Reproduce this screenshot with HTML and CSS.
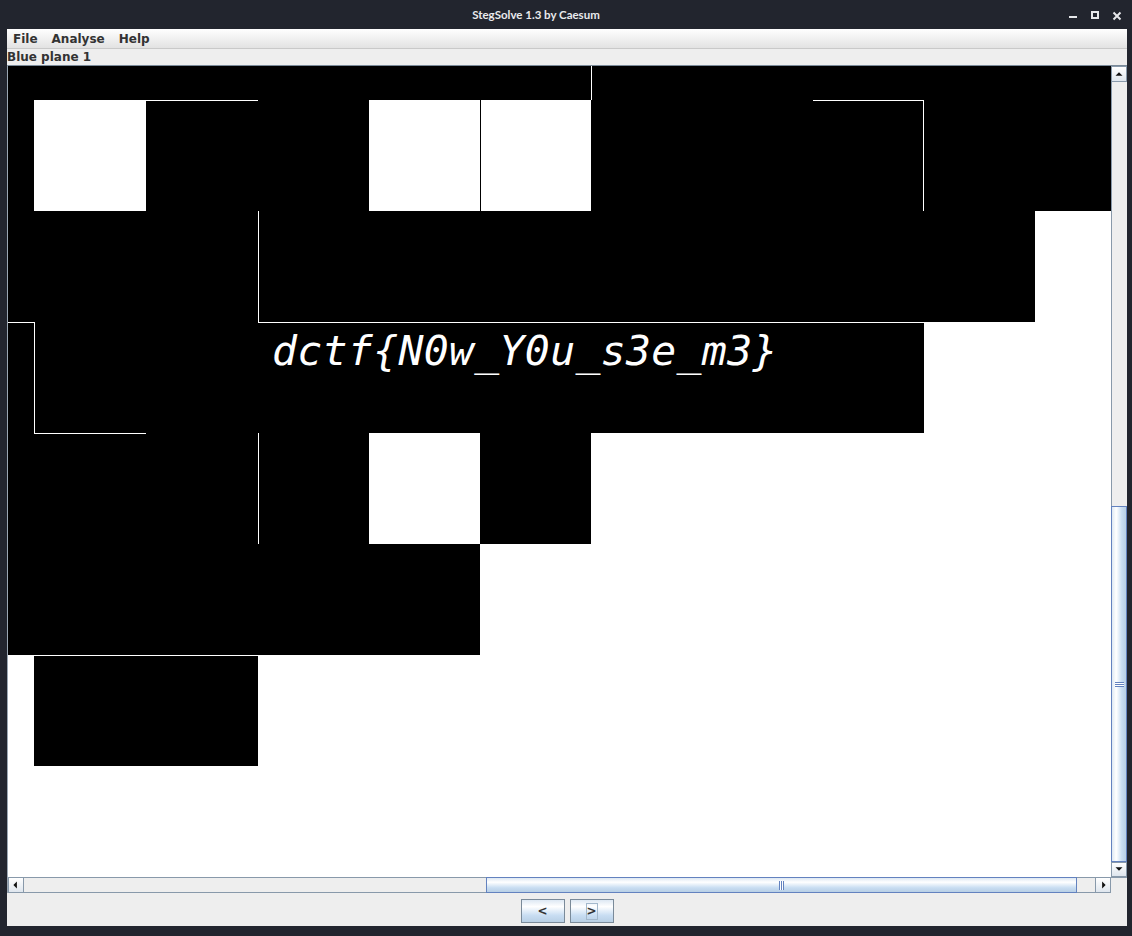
FILE: index.html
```html
<!DOCTYPE html>
<html>
<head>
<meta charset="utf-8">
<title>StegSolve 1.3 by Caesum</title>
<link rel="stylesheet" href="styles.css">
</head>
<body>
<div class="window">
  <div class="titlebar">
    <div class="title">StegSolve 1.3 by Caesum</div>
    <svg class="controls" width="72" height="29" viewBox="0 0 72 29">
      <rect x="9" y="16" width="8" height="2" fill="#e6e7ea"/>
      <rect x="32" y="12" width="6" height="6" fill="none" stroke="#e6e7ea" stroke-width="2"/>
      <path d="M53.5 12.5 L60.5 19.5 M60.5 12.5 L53.5 19.5" stroke="#e6e7ea" stroke-width="2"/>
    </svg>
  </div>
  <div class="client">
    <div class="menubar">
      <span class="menu">File</span>
      <span class="menu">Analyse</span>
      <span class="menu">Help</span>
    </div>
    <div class="label">Blue plane 1</div>
    <div class="scrollpane">
      <div class="pane-main">
        <div class="viewport">
          <div class="c k"></div><div class="c k"></div><div class="c k"></div><div class="c k"></div><div class="c k"></div><div class="c k"></div><div class="c k ll"></div><div class="c k"></div><div class="c k"></div><div class="c k"></div><div class="c k"></div>
          <div class="c k"></div><div class="c w"></div><div class="c k lt"></div><div class="c k"></div><div class="c w"></div><div class="c w dl"></div><div class="c k"></div><div class="c k"></div><div class="c k lt lr"></div><div class="c k"></div><div class="c k"></div>
          <div class="c k"></div><div class="c k"></div><div class="c k"></div><div class="c k ll"></div><div class="c k"></div><div class="c k"></div><div class="c k"></div><div class="c k"></div><div class="c k"></div><div class="c k"></div><div class="c w"></div>
          <div class="c k lt"></div><div class="c k ll"></div><div class="c k"></div><div class="c k lt"></div><div class="c k lt"></div><div class="c k lt"></div><div class="c k lt"></div><div class="c k lt"></div><div class="c k lt"></div><div class="c w"></div><div class="c w"></div>
          <div class="c k"></div><div class="c k lt"></div><div class="c k"></div><div class="c k ll"></div><div class="c w"></div><div class="c k"></div><div class="c w"></div><div class="c w"></div><div class="c w"></div><div class="c w"></div><div class="c w"></div>
          <div class="c k"></div><div class="c k"></div><div class="c k"></div><div class="c k"></div><div class="c k"></div><div class="c w"></div><div class="c w"></div><div class="c w"></div><div class="c w"></div><div class="c w"></div><div class="c w"></div>
          <div class="c w"></div><div class="c k lt"></div><div class="c k lt"></div><div class="c w"></div><div class="c w"></div><div class="c w"></div><div class="c w"></div><div class="c w"></div><div class="c w"></div><div class="c w"></div><div class="c w"></div>
          <div class="c w"></div><div class="c w"></div><div class="c w"></div><div class="c w"></div><div class="c w"></div><div class="c w"></div><div class="c w"></div><div class="c w"></div><div class="c w"></div><div class="c w"></div><div class="c w"></div>
          <div class="flag">dctf{N0w_Y0u_s3e_m3}</div>
        </div>
        <div class="vscroll">
          <div class="arrow-btn v-up">
            <svg width="16" height="16" viewBox="0 0 16 16"><path d="M4 10 L12 10 L8 6 Z" fill="#111"/></svg>
          </div>
          <div class="vtrack">
            <div class="vthumb"><span class="vgrip"></span></div>
          </div>
          <div class="arrow-btn v-down">
            <svg width="16" height="15" viewBox="0 0 16 15"><path d="M4 5 L12 5 L8 9 Z" fill="#111"/></svg>
          </div>
        </div>
      </div>
      <div class="pane-bottom">
        <div class="hscroll">
          <div class="arrow-btn h-left">
            <svg width="16" height="16" viewBox="0 0 16 16"><path d="M9 4 L9 12 L5 8 Z" fill="#111"/></svg>
          </div>
          <div class="htrack">
            <div class="hthumb"><span class="hgrip"></span></div>
          </div>
          <div class="arrow-btn h-right">
            <svg width="16" height="16" viewBox="0 0 16 16"><path d="M7 4 L7 12 L11 8 Z" fill="#111"/></svg>
          </div>
        </div>
        <div class="corner"></div>
      </div>
    </div>
    <div class="buttons">
      <button class="nav">&lt;</button>
      <button class="nav"><span class="focus">&gt;</span></button>
    </div>
  </div>
</div>
</body>
</html>
```
FILE: styles.css
```css
html, body {
  margin: 0;
  padding: 0;
  background: #22252e;
}

.window {
  width: 1132px;
  height: 936px;
  background: #22252e;
  display: flex;
  flex-direction: column;
  overflow: hidden;
}

.titlebar {
  height: 29px;
  flex: none;
  display: flex;
  align-items: center;
}

.title {
  flex: 1;
  text-align: center;
  padding-left: 12px;
  color: #e9eaec;
  font-family: Lato, "Open Sans", sans-serif;
  font-weight: 700;
  font-size: 11.5px;
}

.controls {
  display: block;
  flex: none;
}

.client {
  margin: 0 5px 10px 7px;
  height: 897px;
  flex: none;
  display: flex;
  flex-direction: column;
  background: #eeeeee;
}

.menubar {
  height: 19px;
  border-bottom: 1px solid #c9c9c9;
  background: linear-gradient(#ffffff, #e2e2e2);
  display: flex;
  align-items: center;
  font-family: "DejaVu Sans", sans-serif;
  font-weight: bold;
  font-size: 12px;
  color: #333333;
  flex: none;
}

.menu {
  padding: 0 6px;
  margin-right: 2px;
}

.label {
  height: 16px;
  line-height: 16px;
  font-family: "DejaVu Sans", sans-serif;
  font-weight: bold;
  font-size: 12px;
  color: #333333;
  flex: none;
}

.scrollpane {
  box-sizing: border-box;
  height: 828px;
  border-top: 1px solid #7a8a99;
  border-left: 1px solid #9aa6b2;
  display: flex;
  flex-direction: column;
  flex: none;
}

.pane-main {
  display: flex;
  height: 811px;
}

.viewport {
  position: relative;
  width: 1103px;
  height: 811px;
  overflow: hidden;
  display: grid;
  grid-template-columns: 26px 112px 112px repeat(7, 111px) 76px;
  grid-template-rows: 34px repeat(7, 111px);
  background: #ffffff;
}

.c { box-sizing: border-box; }
.k { background: #000000; }
.w { background: #ffffff; }
.lt { border-top: 1px solid #ffffff; }
.ll { border-left: 1px solid #ffffff; }
.lr { border-right: 1px solid #ffffff; }
.dl { border-left: 1px solid #000000; }

.flag {
  position: absolute;
  left: 264px;
  top: 264px;
  font-family: "DejaVu Sans Mono", monospace;
  font-style: italic;
  font-size: 41.5px;
  letter-spacing: 0.3px;
  line-height: 1;
  color: #ffffff;
  white-space: nowrap;
}

.vscroll {
  width: 16px;
  display: flex;
  flex-direction: column;
  background: #eeeeee;
}

.arrow-btn {
  box-sizing: border-box;
  border: 1px solid #8899aa;
  background: linear-gradient(#ffffff, #dfe6ee);
  display: flex;
  align-items: center;
  justify-content: center;
  flex: none;
}

.arrow-btn svg { display: block; }

.v-up { height: 16px; width: 16px; }
.v-down { height: 15px; width: 16px; }

.vtrack {
  flex: 1;
  display: flex;
  flex-direction: column;
  justify-content: flex-end;
  box-shadow: inset 1px 0 #8899aa;
}

.vthumb {
  box-sizing: border-box;
  height: 356px;
  border: 1px solid #6382bf;
  background: linear-gradient(to right, #dde8f3 0%, #ffffff 30%, #c8ddf2 70%, #b8cfe5 100%);
  display: flex;
  align-items: center;
  justify-content: center;
}

.vgrip {
  width: 9px;
  height: 5px;
  background: repeating-linear-gradient(#6382bf 0 1px, #ffffff 1px 2px);
}

.pane-bottom {
  display: flex;
  height: 16px;
}

.hscroll {
  width: 1103px;
  display: flex;
}

.h-left, .h-right { width: 16px; height: 16px; }

.htrack {
  flex: 1;
  padding-left: 462px;
  box-shadow: inset 0 1px #8899aa, inset 0 -1px #8899aa;
  display: flex;
}

.hthumb {
  box-sizing: border-box;
  width: 591px;
  height: 16px;
  border: 1px solid #6382bf;
  background: linear-gradient(to bottom, #dde8f3 0%, #ffffff 30%, #c8ddf2 70%, #b8cfe5 100%);
  display: flex;
  align-items: center;
  justify-content: center;
}

.hgrip {
  width: 5px;
  height: 9px;
  background: repeating-linear-gradient(to right, #6382bf 0 1px, #ffffff 1px 2px);
}

.corner {
  box-sizing: border-box;
  width: 16px;
  height: 16px;
  background: #eeeeee;
  border-top: 1px solid #8899aa;
}

.buttons {
  height: 33px;
  box-sizing: border-box;
  padding-top: 6px;
  display: flex;
  justify-content: center;
  align-items: flex-start;
  gap: 5px;
  flex: none;
}

.nav {
  box-sizing: border-box;
  width: 44px;
  height: 24px;
  margin: 0;
  padding: 0;
  border: 1px solid #7a8a99;
  background: linear-gradient(to bottom, #dde8f3 0%, #ffffff 30%, #c8ddf2 70%, #b8cfe5 100%);
  font-family: "DejaVu Sans", sans-serif;
  font-weight: bold;
  font-size: 12px;
  color: #333333;
  display: flex;
  align-items: center;
  justify-content: center;
}

.focus {
  box-sizing: border-box;
  display: inline-flex;
  align-items: center;
  justify-content: center;
  width: 12px;
  height: 17px;
  border: 1px solid #a3b8cc;
}
```
